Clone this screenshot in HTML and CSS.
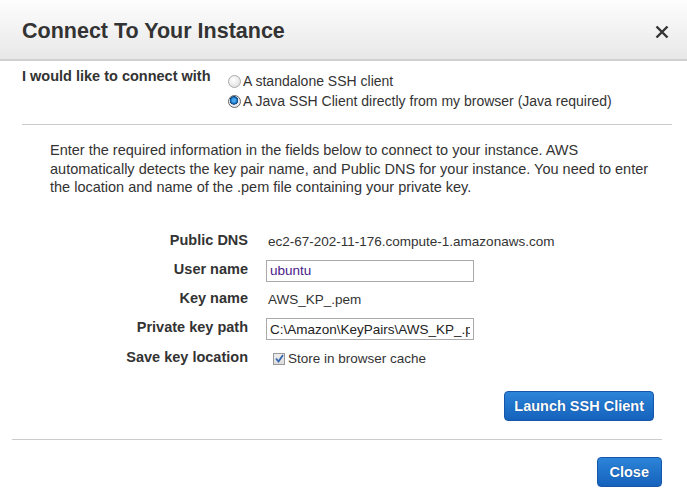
FILE: index.html
```html
<!DOCTYPE html>
<html lang="en">

<head>
  <meta charset="UTF-8">
  <title>Connect To Your Instance</title>
  <link rel="stylesheet" href="styles.css">
</head>

<body>
  <div class="dialog">
    <div class="head">
      <h1>Connect To Your Instance</h1>
      <span class="x">
        <svg width="14" height="14" viewBox="0 0 14 14"><path d="M1.5 1.5 L12.5 12.5 M12.5 1.5 L1.5 12.5" stroke="#333" stroke-width="2.4"/></svg>
      </span>
    </div>
    <div class="choose">
      <div class="choose-label">I would like to connect with</div>
      <div class="radios">
        <label><span class="radio"></span>A standalone SSH client</label>
        <label><span class="radio on"></span>A Java SSH Client directly from my browser (Java required)</label>
      </div>
    </div>
    <div class="body">
      <p class="intro">Enter the required information in the fields below to connect to your instance. AWS automatically detects the key pair name, and Public DNS for your instance. You need to enter the location and name of the .pem file containing your private key.</p>
      <div class="form">
        <div class="lbl">Public DNS</div>
        <div class="val">ec2-67-202-11-176.compute-1.amazonaws.com</div>
        <div class="lbl">User name</div>
        <div class="val"><input class="field user" value="ubuntu"></div>
        <div class="lbl">Key name</div>
        <div class="val">AWS_KP_.pem</div>
        <div class="lbl">Private key path</div>
        <div class="val"><input class="field" value="C:\Amazon\KeyPairs\AWS_KP_.pem"></div>
        <div class="lbl">Save key location</div>
        <div class="val"><span class="check"><svg width="9" height="9" viewBox="0 0 9 9"><path d="M1 4.5 L3.5 7.5 L8 1" fill="none" stroke="#3566b0" stroke-width="1.8"/></svg></span>Store in browser cache</div>
      </div>
      <div class="launch-row"><button class="btn launch">Launch SSH Client</button></div>
    </div>
    <div class="foot"><button class="btn close">Close</button></div>
  </div>
</body>

</html>
```

FILE: styles.css
```css
body {
  margin: 0;
  background: #fff;
  font-family: "Liberation Sans", Arial, sans-serif;
  color: #333;
  font-size: 13px;
}

.dialog { width: 687px; height: 497px; }

.head {
  height: 59px;
  border-bottom: 2px solid #d0d0d0;
  background: linear-gradient(#fdfdfd, #e8e8e8);
  display: flex;
  align-items: center;
  justify-content: space-between;
  padding: 0 18px 0 22px;
}
.head h1 {
  margin: 0;
  font-size: 21.5px;
  font-weight: bold;
  color: #333;
  padding-top: 3px;
}
.x { display: flex; padding-top: 4px; }

.choose {
  margin: 0 15px 0 22px;
  padding: 6px 0 15px;
  border-bottom: 1px solid #ccc;
  display: flex;
}
.choose-label { font-weight: bold; font-size: 14.5px; width: 206px; padding-top: 1px; }
.radios { display: flex; flex-direction: column; gap: 4px; padding-top: 6px; font-size: 14px; }
.radios label { display: flex; align-items: center; color: #333; }

.radio {
  width: 13px;
  height: 13px;
  border-radius: 50%;
  border: 1px solid #aaa;
  background: radial-gradient(circle at 40% 35%, #fff, #d8d8d8);
  margin-right: 2px;
  box-sizing: border-box;
}
.radio.on {
  border-color: #666;
  background: radial-gradient(circle at 45% 40%, #4aa8f0 0 1.5px, #0d5fa8 3.5px, #0a3d70 4px, #e8e8ee 4.5px);
}

.body { padding: 0 0 0 50px; }
.intro { margin: 16px 25px 0 0; line-height: 18.5px; font-size: 14.5px; }

.form {
  display: grid;
  grid-template-columns: 198px 1fr;
  column-gap: 20px;
  row-gap: 7.25px;
  margin-top: 34px;
  align-items: center;
}
.lbl { text-align: right; font-weight: bold; font-size: 14.5px; height: 22px; line-height: 18px; }
.val { height: 22px; line-height: 22px; display: flex; align-items: center; font-size: 13.5px; }
.field {
  width: 208px;
  height: 22px;
  box-sizing: border-box;
  border: 1px solid #aaa;
  font: 13.5px "Liberation Sans", Arial, sans-serif;
  color: #222;
  padding: 0 3px;
  margin-left: -2px;
}
.user { color: #4a1a8a; }

.check {
  width: 12px;
  height: 12px;
  border: 1px solid #999;
  box-sizing: border-box;
  background: linear-gradient(#eee, #ddd);
  display: inline-flex;
  align-items: center;
  justify-content: center;
  margin: 0 3px 0 5px;
}

.launch-row { display: flex; justify-content: flex-end; padding: 21px 33px 0 0; }

.btn {
  font: bold 14.5px "Liberation Sans", Arial, sans-serif;
  color: #fff;
  background: linear-gradient(#2c84d8, #1562bc);
  border: 1px solid #1556a8;
  border-radius: 4px;
  height: 30px;
  padding: 0 9px;
  text-shadow: 0 0 1px #0a3a80;
}

.foot {
  margin: 18px 25px 0 12px;
  border-top: 1px solid #ccc;
  display: flex;
  justify-content: flex-end;
  padding-top: 17px;
}
.btn.close { padding: 0 12px; }
```
